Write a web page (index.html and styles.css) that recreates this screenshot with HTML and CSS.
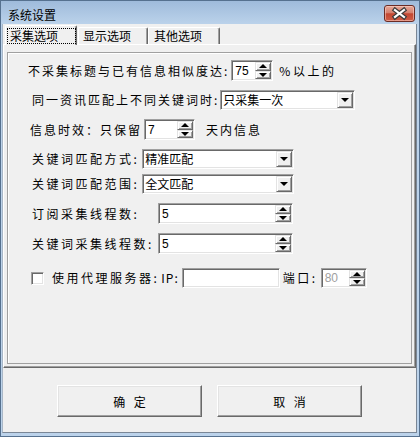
FILE: index.html
```html
<!DOCTYPE html>
<html lang="zh-CN">
<head>
    <meta charset="UTF-8">
    <title>系统设置</title>
    <link rel="stylesheet" href="styles.css">
</head>
<body>
    <div class="window">
        <div class="titlebar">
            <span class="title">系统设置</span>
            <div class="close-btn">
                <svg width="29" height="15" viewBox="0 0 29 15">
                    <path d="M10 4 L19 11 M19 4 L10 11" stroke="#3a3a3a" stroke-width="4.5" stroke-linecap="square"/>
                    <path d="M10 4 L19 11 M19 4 L10 11" stroke="#ffffff" stroke-width="2.2" stroke-linecap="square"/>
                </svg>
            </div>
        </div>
        <div class="client">
            <div class="tabs">
                <div class="tab tab-active"><span class="focus">采集选项</span></div>
                <div class="tab tab-2">显示选项</div>
                <div class="tab tab-3">其他选项</div>
            </div>
            <div class="page">
                <div class="frame">
                    <!-- 相似度 -->
                    <div class="row row-spin row-first">
                        <span class="label">不采集标题与已有信息相似度达:</span>
                        <div class="field spin spin-sim">
                            <span class="val">75</span>
                            <div class="spin-btns"><i class="sbtn up"></i><i class="sbtn down"></i></div>
                        </div>
                        <span class="label after-sim">%以上的</span>
                    </div>
                    <div class="row row-combo row-pad-2">
                        <span class="label">同一资讯匹配上不同关键词时:</span>
                        <div class="field combo combo-once">
                            <span class="val cjk">只采集一次</span>
                            <i class="drop"></i>
                        </div>
                    </div>
                    <div class="row row-spin row-pad-3">
                        <span class="label">信息时效：只保留</span>
                        <div class="field spin spin-days">
                            <span class="val">7</span>
                            <div class="spin-btns"><i class="sbtn up"></i><i class="sbtn down"></i></div>
                        </div>
                        <span class="label after-days">天内信息</span>
                    </div>
                    <!-- 关键词 -->
                    <div class="row row-combo row-pad-2">
                        <span class="label label-wide">关键词匹配方式:</span>
                        <div class="field combo combo-kw">
                            <span class="val cjk">精准匹配</span>
                            <i class="drop"></i>
                        </div>
                    </div>
                    <div class="row row-combo row-pad-2 row-tight">
                        <span class="label label-wide">关键词匹配范围:</span>
                        <div class="field combo combo-kw">
                            <span class="val cjk">全文匹配</span>
                            <i class="drop"></i>
                        </div>
                    </div>
                    <div class="row row-spin row-pad-2">
                        <span class="label label-wide label-thread">订阅采集线程数:</span>
                        <div class="field spin spin-thread">
                            <span class="val">5</span>
                            <div class="spin-btns"><i class="sbtn up"></i><i class="sbtn down"></i></div>
                        </div>
                    </div>
                    <div class="row row-spin row-pad-2">
                        <span class="label label-wide label-thread">关键词采集线程数:</span>
                        <div class="field spin spin-thread">
                            <span class="val">5</span>
                            <div class="spin-btns"><i class="sbtn up"></i><i class="sbtn down"></i></div>
                        </div>
                    </div>
                    <!-- 代理 -->
                    <div class="row row-combo row-pad-proxy row-loose">
                        <span class="field checkbox"></span>
                        <span class="label label-wide label-proxy">使用代理服务器:</span>
                        <span class="label label-ip">IP:</span>
                        <div class="field input-ip"></div>
                        <span class="label label-wide label-port">端口:</span>
                        <div class="field spin spin-port">
                            <span class="val val-off">80</span>
                            <div class="spin-btns"><i class="sbtn up"></i><i class="sbtn down"></i></div>
                        </div>
                    </div>
                </div>
            </div>
            <div class="buttons">
                <div class="btn">确 定</div>
                <div class="btn">取 消</div>
            </div>
        </div>
    </div>
</body>
</html>
```

FILE: styles.css
```css
* {
    box-sizing: border-box;
}
body {
    margin: 0;
    font-family: "Noto Sans CJK SC", "Liberation Sans", sans-serif;
    font-size: 12px;
    color: #000;
    background: #bcd3eb;
}
.window {
    width: 420px;
    height: 437px;
    border: 1px solid #56718f;
    padding: 0 2px 3px 1px;
    background: linear-gradient(#9fbbdb 0, #bcd3eb 24px, #bcd3eb 100%);
    display: flex;
    flex-direction: column;
}
.titlebar {
    height: 23px;
    display: flex;
    align-items: flex-start;
    justify-content: space-between;
    padding-left: 6px;
    padding-right: 2px;
}
.title {
    line-height: 23px;
    padding-top: 2px;
}
.close-btn {
    margin-top: 4px;
    width: 31px;
    height: 17px;
    border: 1px solid #6b2c25;
    border-radius: 3px;
    background: linear-gradient(#e6a898 0, #d5806f 45%, #c24631 52%, #cf5d47 100%);
    box-shadow: inset 0 0 0 1px rgba(255, 220, 210, 0.5);
}
.close-btn svg {
    display: block;
}
.client {
    flex: 1;
    background: #f0f0f0;
    border-left: 1px solid #a9b7c7;
    border-right: 1px solid #7a8796;
    border-bottom: 1px solid #7a8796;
    display: flex;
    flex-direction: column;
}

/* tabs */
.tabs {
    height: 20px;
    display: flex;
    align-items: flex-end;
    padding-left: 2px;
}
.tab {
    height: 17px;
    background: #f0f0f0;
    border-top: 1px solid #fff;
    border-left: 1px solid #fff;
    border-right: 1px solid #696969;
    border-radius: 2px 2px 0 0;
    box-shadow: inset -1px 0 0 #a0a0a0;
    line-height: 15px;
    white-space: nowrap;
}
.tab-2 {
    width: 70px;
    margin-left: 1px;
    padding-left: 4px;
}
.tab-3 {
    width: 72px;
    padding-left: 5px;
}
.tab-active {
    position: relative;
    z-index: 1;
    width: 72px;
    height: 20px;
    margin-bottom: -1px;
    padding: 2px 0 0 1px;
}
.focus {
    display: block;
    width: 69px;
    height: 16px;
    border: 1px dotted #000;
    padding-left: 2px;
    line-height: 14px;
}

/* page */
.page {
    height: 324px;
    border-top: 1px solid #fff;
    border-left: 1px solid #fff;
    border-right: 1px solid #696969;
    border-bottom: 1px solid #696969;
    box-shadow: inset -1px -1px 0 #a0a0a0;
    padding: 7px 0 0 3px;
}
.frame {
    width: 405px;
    height: 312px;
    border: 1px solid #a0a0a0;
    box-shadow: inset 1px 1px 0 #fff;
    padding-top: 7px;
}
.row {
    display: flex;
    align-items: center;
    margin-top: 9px;
    padding-left: 23px;
}
.row-first {
    margin-top: 0;
    padding-left: 20px;
}
.row-spin {
    height: 21px;
}
.row-combo {
    height: 20px;
}
.row-pad-2 {
    padding-left: 24px;
}
.row-pad-3 {
    padding-left: 22px;
}
.row-pad-proxy {
    padding-left: 23px;
}
.row-tight {
    margin-top: 5px;
}
.row-loose {
    margin-top: 14px;
}
.label {
    letter-spacing: 2px;
    line-height: 14px;
    white-space: nowrap;
}
.label-wide {
    letter-spacing: 2.5px;
}
.label-thread {
    width: 126px;
}
.after-sim {
    margin-left: 6px;
    letter-spacing: 2.5px;
}
.after-days {
    margin-left: 11px;
}
.label-proxy {
    margin-left: 8px;
}
.label-ip {
    margin-left: 2px;
    letter-spacing: 1px;
}
.label-port {
    margin-left: 3px;
}

/* sunken controls */
.field {
    display: flex;
    align-items: center;
    height: 100%;
    padding: 1px;
    background: #fff;
    border: 1px solid;
    border-color: #a0a0a0 #fff #fff #a0a0a0;
    box-shadow: inset 1px 1px 0 #696969, inset -1px -1px 0 #e3e3e3;
}
.val {
    flex: 1;
    padding-left: 2px;
    font-family: "Liberation Sans", sans-serif;
    font-size: 12px;
    line-height: 14px;
}
.val.cjk {
    font-family: "Noto Sans CJK SC", sans-serif;
    padding-left: 1px;
}
.val-off {
    color: #a0a0a0;
}
.spin-sim {
    width: 42px;
    margin-left: 2px;
}
.spin-days {
    width: 51px;
    margin-left: 2px;
}
.spin-thread {
    width: 135px;
}
.spin-port {
    width: 46px;
    height: 20px;
    margin-left: 3px;
}
.combo-once {
    width: 135px;
    margin-left: 1px;
}
.combo-kw {
    width: 152px;
    margin-left: 3px;
}
.input-ip {
    width: 98px;
    margin-left: 3px;
}
.checkbox {
    width: 13px;
    height: 13px;
    padding: 0;
}

/* raised buttons inside controls */
.drop,
.sbtn {
    position: relative;
    display: block;
    width: 16px;
    background: #f0f0f0;
    border-top: 1px solid #e3e3e3;
    border-left: 1px solid #e3e3e3;
    border-right: 1px solid #696969;
    border-bottom: 1px solid #696969;
    box-shadow: inset 1px 1px 0 #fff, inset -1px -1px 0 #a0a0a0;
}
.drop {
    height: 16px;
}
.spin-btns {
    display: flex;
    flex-direction: column;
    height: 100%;
}
.sbtn {
    flex: 1;
}
.drop::after,
.sbtn::after {
    content: "";
    position: absolute;
    left: 50%;
    top: 50%;
    margin-left: -4px;
    border-left: 4px solid transparent;
    border-right: 4px solid transparent;
}
.drop::after,
.down::after {
    margin-top: -2px;
    border-top: 4px solid #000;
}
.up::after {
    margin-top: -2px;
    border-bottom: 4px solid #000;
}

/* dialog buttons */
.buttons {
    display: flex;
    gap: 15px;
    padding: 17px 0 0 54px;
}
.btn {
    width: 145px;
    height: 32px;
    background: #f0f0f0;
    border-top: 1px solid #fff;
    border-left: 1px solid #fff;
    border-right: 1px solid #696969;
    border-bottom: 1px solid #696969;
    box-shadow: inset -1px -1px 0 #a0a0a0, inset 1px 1px 0 #e3e3e3;
    display: flex;
    align-items: center;
    justify-content: center;
    letter-spacing: 3px;
    padding-left: 3px;
}
```
